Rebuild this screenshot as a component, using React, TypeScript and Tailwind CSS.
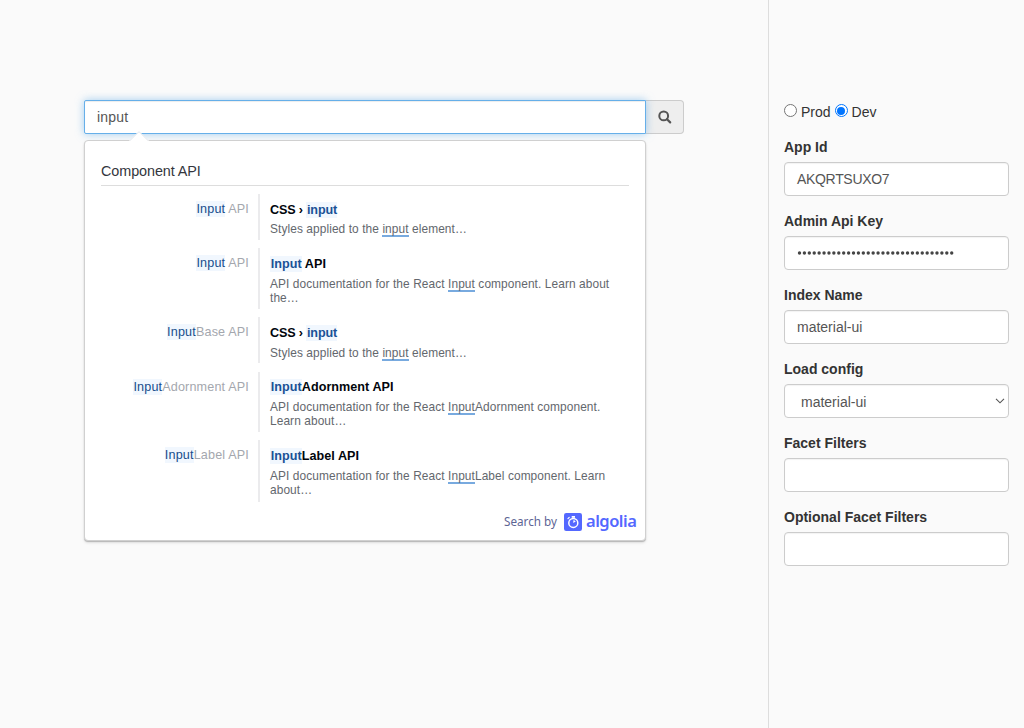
import React from "react";

type Hit = {
  rest: string;
  title: React.ReactNode;
  body: React.ReactNode;
  height: string;
};

const Mark = ({ children }: { children: React.ReactNode }) => (
  <span className="-my-px bg-[#f1f7fe] py-px text-[#174d8c]">{children}</span>
);

const TitleMark = ({ children }: { children: React.ReactNode }) => (
  <span className="-my-px bg-[#f1f7fe] py-px pl-[0.8px] text-[#1a5296]">{children}</span>
);

const Under = ({ children }: { children: React.ReactNode }) => (
  <span className="pb-px shadow-[inset_0_-2px_0_0_#78aadf]">{children}</span>
);

const cssTitle = (
  <span className="tracking-[-0.15px]">
    CSS › <TitleMark>input</TitleMark>
  </span>
);

const cssBody = (
  <>
    Styles applied to the <Under>input</Under> element…
  </>
);

const hits: Hit[] = [
  { rest: " API", title: cssTitle, body: cssBody, height: "h-[46px] mb-[8.4px]" },
  {
    rest: " API",
    title: (
      <>
        <TitleMark>Input</TitleMark> API
      </>
    ),
    body: (
      <>
        API documentation for the React <Under>Input</Under> component. Learn about
        <br />
        the…
      </>
    ),
    height: "h-[60.5px] mb-[8.4px]",
  },
  { rest: "Base API", title: cssTitle, body: cssBody, height: "h-[46px] mb-[8.4px]" },
  {
    rest: "Adornment API",
    title: (
      <>
        <TitleMark>Input</TitleMark>Adornment API
      </>
    ),
    body: (
      <>
        API documentation for the React <Under>Input</Under>Adornment component.
        <br />
        Learn about…
      </>
    ),
    height: "h-[60.5px] mb-[8px]",
  },
  {
    rest: "Label API",
    title: (
      <>
        <TitleMark>Input</TitleMark>Label API
      </>
    ),
    body: (
      <>
        API documentation for the React <Under>Input</Under>Label component. Learn
        <br />
        about…
      </>
    ),
    height: "h-[61.4px]",
  },
];

function HitRow({ hit }: { hit: Hit }) {
  return (
    <div className={`flex ${hit.height}`}>
      <div className="w-[157px] shrink-0 whitespace-nowrap pr-[9px] pt-[7px] text-right text-[12.6px] leading-[16px] tracking-[0.16px] text-[#a4a7ae]">
        <Mark>Input</Mark>
        {hit.rest}
      </div>
      <div className="flex-1 border-l-2 border-[#ebebed] pl-[10px] pt-[7.6px]">
        <div className="whitespace-nowrap text-[12.6px] font-bold leading-[16px] tracking-[0.04px] text-[#02060c]">{hit.title}</div>
        <div className="mt-[4.8px] whitespace-nowrap text-[11.9px] leading-[14px] tracking-[0.09px] text-[#63676d]">{hit.body}</div>
      </div>
    </div>
  );
}

function Field({ label, children }: { label: string; children?: React.ReactNode }) {
  return (
    <div className="mb-[15px] flex flex-col">
      <div className="mb-[5px] h-5 text-sm font-bold leading-5 text-[#333]">{label}</div>
      <div className="flex h-[34px] items-center rounded border border-[#ccc] bg-white px-3 text-sm text-[#555] shadow-[inset_0_1px_1px_rgba(0,0,0,0.05)]">
        {children}
      </div>
    </div>
  );
}

function AlgoliaMark() {
  return (
    <svg width="18" height="18" viewBox="0 0 18 18" className="ml-[7px]">
      <rect width="18" height="18" rx="2.2" fill="#5468ff" />
      <circle cx="9.3" cy="9.9" r="4.5" fill="none" stroke="#fff" strokeWidth="1.5" />
      <path d="M7.7 3h3.3v1.8H7.7z" fill="#fff" />
      <path d="M4 5.6l1.2-1.2" stroke="#fff" strokeWidth="1.3" strokeLinecap="round" />
      <path d="M9.3 10V7.2a2.8 2.8 0 0 1 2.4 1.4z" fill="#fff" />
    </svg>
  );
}

export default function App() {
  return (
    <div className="flex h-[728px] w-[1024px] overflow-hidden bg-[#fafafa] font-['Liberation_Sans',Arial,sans-serif] text-sm text-[#333]">
      <main className="w-[768px] pl-[84px] pt-[100px]">
        <div className="flex h-[34px] w-[600px]">
          <div className="z-10 flex w-[562px] items-center rounded-l-[2px] border border-[#66afe9] bg-white px-3 tracking-[0.2px] text-[#555] shadow-[inset_0_1px_1px_rgba(0,0,0,0.075),0_0_8px_rgba(102,175,233,0.6)]">
            input
          </div>
          <div className="flex flex-1 items-center justify-center rounded-r border border-l-0 border-[#ccc] bg-[#eee]">
            <svg width="14" height="14" viewBox="0 0 14 14" fill="none" stroke="#555">
              <circle cx="5.7" cy="5.9" r="4.4" strokeWidth="2" />
              <path d="M9 9.2l3.2 3.2" strokeWidth="2.2" strokeLinecap="round" />
            </svg>
          </div>
        </div>
        <section className="relative z-20 mt-[6px] h-[401px] w-[562px] rounded border border-[#d0d0d0] bg-white px-4 shadow-[0_1px_1px_rgba(0,0,0,0.2),0_2px_3px_rgba(0,0,0,0.1)]">
          <svg className="absolute left-[44px] top-[-10px]" width="20" height="11" viewBox="0 0 20 11">
            <path d="M0 10L10 0l10 10v1H0z" fill="#fff" />
            <path d="M1 9.5L10 .7l9 8.8" fill="none" stroke="#d5dde4" strokeWidth=".7" />
          </svg>
          <h2 className="mb-[8px] h-[45px] border-b border-[#ddd] pt-[20px] text-[14.4px] leading-5 tracking-[-0.08px] text-[#33363d]">
            Component API
          </h2>
          {hits.map((hit, i) => (
            <HitRow key={i} hit={hit} />
          ))}
          <div className="-mr-[8px] mt-[10px] flex h-5 items-center justify-end font-['Noto_Sans',sans-serif] text-[11.7px] text-[#5d6494]">
            <span>Search by</span>
            <AlgoliaMark />
            <span className="-mt-px ml-[4px] w-[51px] whitespace-nowrap text-[16.5px] font-semibold leading-5 tracking-[-0.5px] text-[#5468ff]">
              algolia
            </span>
          </div>
        </section>
      </main>
      <aside className="flex-1 border-l border-[#ddd] px-[15px] pt-[102px]">
        <div className="mb-[15px] flex h-5 items-center">
          <span className="mb-[3px] h-[13px] w-[13px] rounded-full border border-[#767676] bg-white" />
          <span className="ml-[4px]">Prod</span>
          <span className="mb-[3px] ml-[4px] flex h-[13px] w-[13px] items-center justify-center rounded-full border border-[#0075ff] bg-white">
            <span className="h-[8px] w-[8px] rounded-full bg-[#0075ff]" />
          </span>
          <span className="ml-[4px]">Dev</span>
        </div>
        <Field label="App Id">
          <span className="tracking-[-0.32px]">AKQRTSUXO7</span>
        </Field>
        <Field label="Admin Api Key">
          <svg width="160" height="6" viewBox="0 0 160 6" fill="#444">
            {Array.from({ length: 32 }, (_, i) => (
              <circle key={i} cx={2.5 + i * 4.91} cy="3" r="1.7" />
            ))}
          </svg>
        </Field>
        <Field label="Index Name">material-ui</Field>
        <Field label="Load config">
          <span className="flex-1 pl-1 pt-px">material-ui</span>
          <svg className="-mr-[9px]" width="10" height="6" viewBox="0 0 10 6" fill="none" stroke="#555">
            <path d="M1 .8l4 4 4-4" strokeWidth="1.1" />
          </svg>
        </Field>
        <Field label="Facet Filters" />
        <Field label="Optional Facet Filters" />
      </aside>
    </div>
  );
}
